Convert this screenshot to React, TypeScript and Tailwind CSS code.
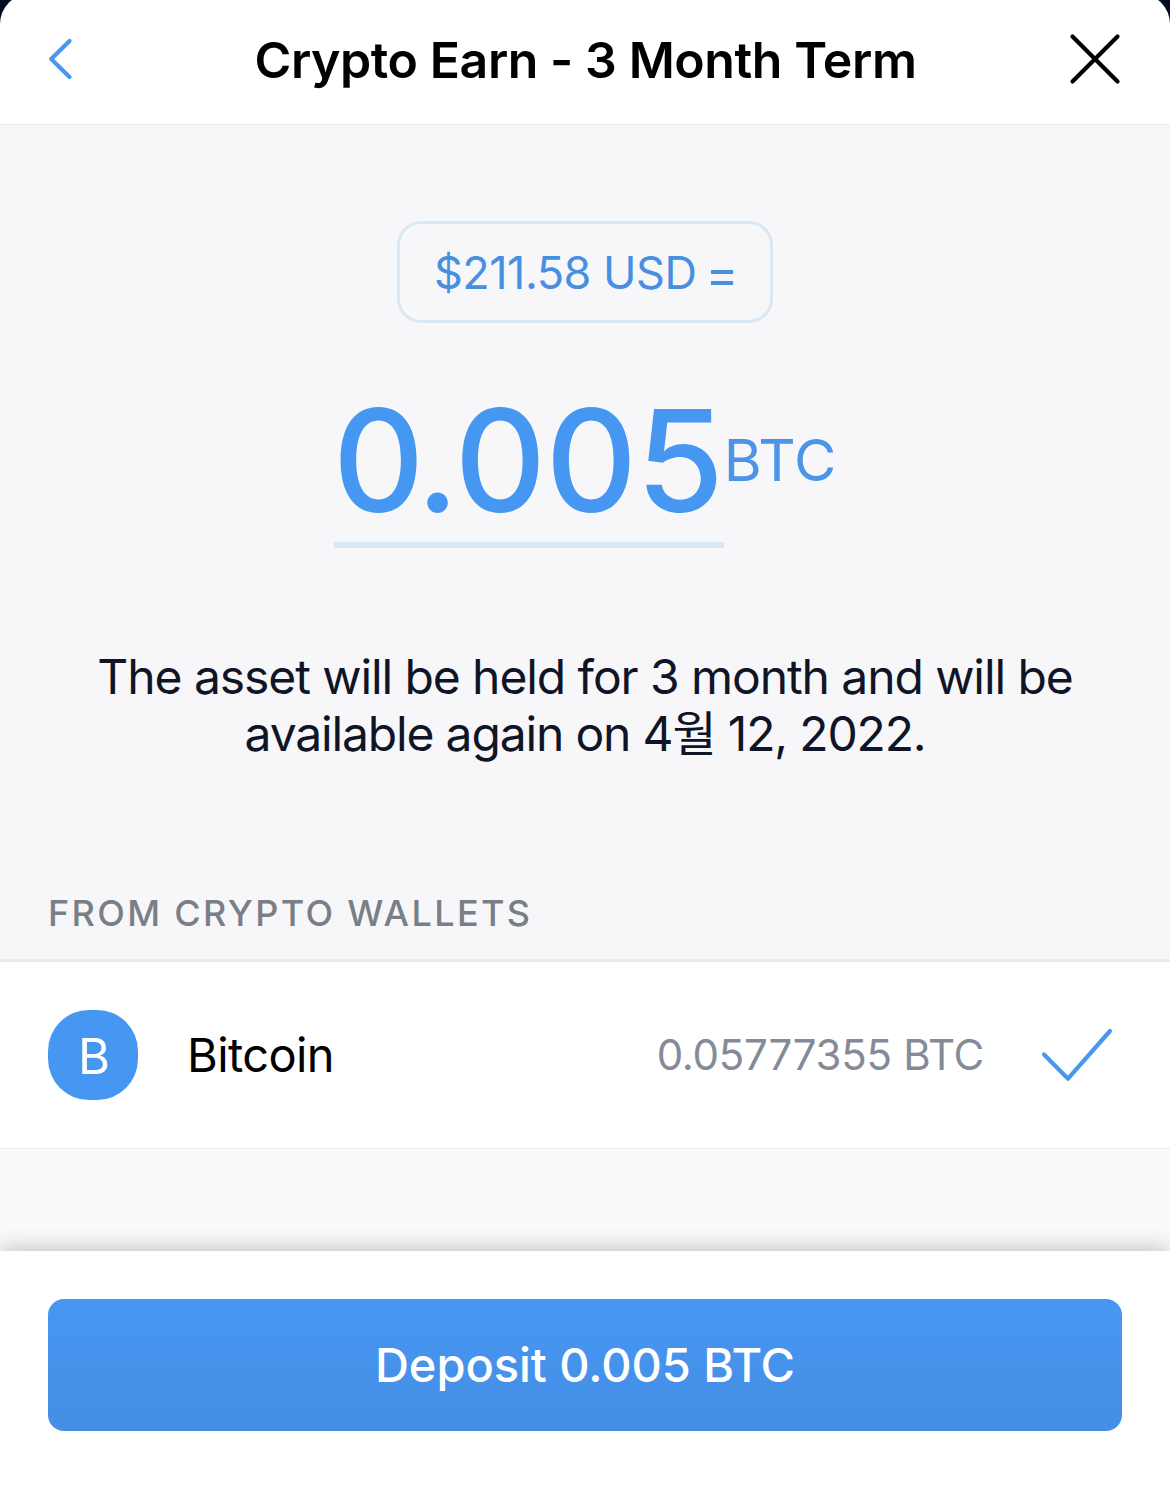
import React from 'react';

const Header: React.FC = () => (
  <header className="-mt-1.5 flex h-[131px] shrink-0 items-center justify-between rounded-t-[30px] border-b border-[#e8e9ec] bg-white pl-12 pr-[49px]">
    <button className="w-[52px]" aria-label="Back">
      <svg
        width="26"
        height="44"
        viewBox="0 0 26 44"
        fill="none"
        stroke="#4998ee"
        strokeWidth="4.2"
        strokeLinecap="round"
        strokeLinejoin="round"
      >
        <path d="M21.5 4 3.2 22 21.5 40" />
      </svg>
    </button>
    <h1 className="pl-0.5 pt-0.5 text-[50px] font-semibold leading-[60px] tracking-[-0.43px] whitespace-nowrap">
      Crypto Earn - 3 Month Term
    </h1>
    <button className="w-[52px]" aria-label="Close">
      <svg width="52" height="52" viewBox="0 0 52 52" fill="none" stroke="#000" strokeWidth="4.2" strokeLinecap="round">
        <path d="M3.500 3.500 48.500 48.500M48.500 3.500 3.500 48.500" />
      </svg>
    </button>
  </header>
);

const Amount: React.FC = () => (
  <section className="flex flex-col items-center pt-24">
    <div className="flex h-[102px] w-[376px] items-center justify-center rounded-[24px] border-[3px] border-[#d8e8f5] pl-0.5 pt-0.5 text-[45px] tracking-[-0.5px] text-[#478fe1]">
      <span>$211.58 USD</span>
      <span className="ml-[9px] pt-0.5 text-[50px] leading-[54px]">=</span>
    </div>
    <div className="mt-[67px] flex">
      <div className="h-[158px] w-[390px] border-b-[6px] border-[#d8e8f5] text-[142px] font-medium leading-[141px] whitespace-nowrap text-[#4697f2]">
        <span className="-ml-px tracking-[-4.5px]">0.</span>
        <span className="tracking-[-0.8px]">005</span>
      </div>
      <span className="mt-[34px] text-[58px] leading-[72px] text-[#4b94e8]">BTC</span>
    </div>
    <p className="mt-[100px] text-center text-[48px] leading-[57px] tracking-[-1.08px] text-[#0f1526]">
      The asset will be held for 3 month and will be
      <br />
      <span className="tracking-[-1.16px]">available again on 4월 12, 2022.</span>
    </p>
  </section>
);

const WalletRow: React.FC = () => (
  <div className="flex h-[190px] shrink-0 items-center border-b border-t-[3px] border-b-[#e8e9ec] border-t-[#e9e9eb] bg-white pl-12 pr-[57px]">
    <div className="flex h-[90px] w-[90px] items-center justify-center rounded-[41px] bg-[#4697f2] pl-0.5 pt-1 text-[49px] text-white">
      B
    </div>
    <span className="ml-[49px] text-[47px] tracking-[-0.6px]">Bitcoin</span>
    <span className="ml-auto pb-0.5 text-[42px] tracking-[-0.28px] text-[#858b96]">0.05777355 BTC</span>
    <svg
      className="ml-[57px]"
      width="72"
      height="54"
      viewBox="0 0 72 54"
      fill="none"
      stroke="#4998ee"
      strokeWidth="4.2"
      strokeLinecap="round"
      strokeLinejoin="round"
    >
      <path d="M3 26.500 27 50.700 69 3" />
    </svg>
  </div>
);

export default function App() {
  return (
    <div className="bg-[#020d21] font-['Inter','Noto_Sans_CJK_KR',sans-serif] text-black">
      <div className="flex h-[1509px] w-[1170px] flex-col overflow-hidden">
        <Header />
        <main className="h-[834px] shrink-0 bg-[#f7f7fa]">
          <Amount />
          <h2 className="mt-[129px] pl-12 text-[36px] font-medium leading-[44px] tracking-[2.35px] text-[#797f86]">
            FROM CRYPTO WALLETS
          </h2>
        </main>
        <WalletRow />
        <div className="flex flex-1 flex-col justify-end bg-[#f9fafc]">
          <footer className="h-[258px] bg-white px-12 pt-12 shadow-[0_-2px_22px_rgba(0,0,0,0.24)]">
            <button className="h-[132px] w-full rounded-[16px] bg-linear-to-b from-[#4797f2] to-[#448ee5] text-[47px] font-medium tracking-[-0.05px] text-white">
              Deposit 0.005 BTC
            </button>
          </footer>
        </div>
      </div>
    </div>
  );
}
